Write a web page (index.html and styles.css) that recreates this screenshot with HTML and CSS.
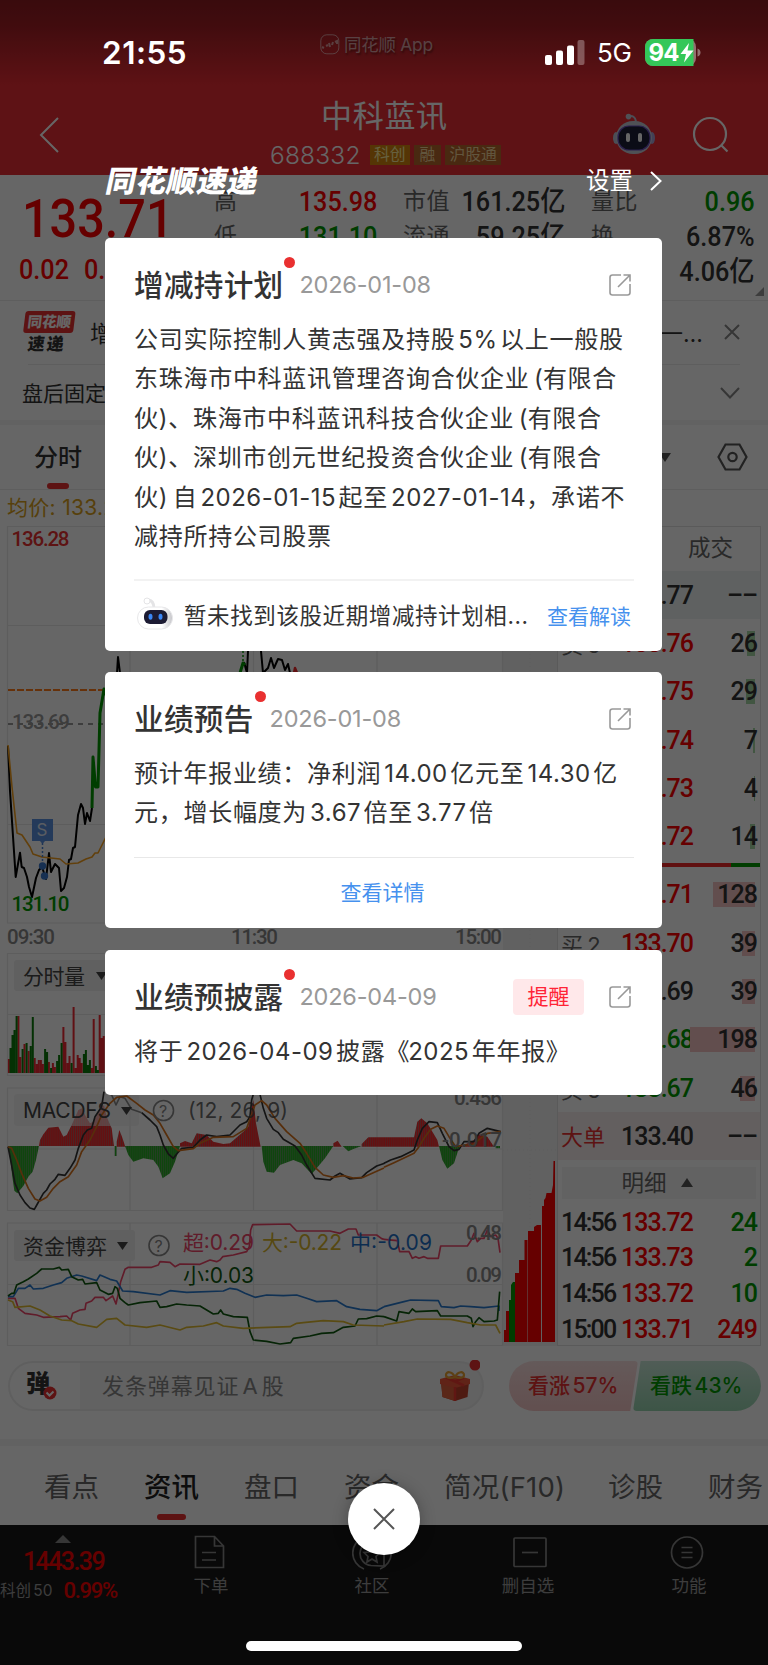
FILE: index.html
```html
<!DOCTYPE html>
<html lang="zh-CN">
<head>
<meta charset="utf-8">
<title>中科蓝讯 688332</title>
<link rel="stylesheet" href="styles.css">
</head>
<body>
<div class="screen">
<main class="page">
  <header class="top">
    <div class="watermark">
      <svg width="20" height="21" viewBox="0 0 20 21" fill="none" stroke="#fff" stroke-opacity=".55"><rect x=".8" y=".8" width="18" height="19" rx="6"/><path stroke-width="2" d="M2 13l2 1M6 12l2-1M9 9l1 4M12 11l1-3M15 8l2-1v3"/></svg>
      <span>同花顺 App</span>
    </div>
    <div class="titlebar">
      <svg class="back" width="22" height="38" viewBox="0 0 22 38" fill="none" stroke="#fff" stroke-width="2"><path d="M20 2L3 19l17 17"/></svg>
      <div class="name">
        <h1>中科蓝讯</h1>
        <div class="code"><span class="num">688332</span><i class="tag gold">科创</i><i class="tag">融</i><i class="tag">沪股通</i></div>
      </div>
      <svg class="bot" width="44" height="42" viewBox="0 0 44 42"><path d="M16 3.500q7-2 8 5" fill="none" stroke="#bcc4d8" stroke-width="2"/><circle cx="16.500" cy="3.600" r="2.800" fill="#c6cbd6"/><ellipse cx="4" cy="25" rx="3" ry="6" fill="#bcc4d8"/><ellipse cx="40" cy="25" rx="3" ry="6" fill="#a9a4d8"/><rect x="4" y="8" width="36" height="33" rx="17" fill="#c6cbd6"/><rect x="6" y="13" width="32" height="24" rx="11" fill="#1c2038" stroke="#6b4fc0" stroke-width="1.200"/><rect x="14" y="20" width="4" height="9" rx="2" fill="#fff"/><rect x="26" y="20" width="4" height="9" rx="2" fill="#fff"/></svg>
      <svg class="search" width="38" height="38" viewBox="0 0 38 38" fill="none" stroke="#fff" stroke-width="2.200"><circle cx="18" cy="18" r="16"/><path d="M29.500 29.500l6 6"/></svg>
    </div>
  </header>

  <section class="quote">
    <div class="last"><b class="din">133.71</b><p><span class="din">0.02</span><span class="din">0.01%</span></p></div>
    <div class="cell k1"><span>高</span><b class="din red">135.98</b><span>低</span><b class="din green">131.10</b></div>
    <div class="cell k2"><span>市值</span><b class="din">161.25亿</b><span>流通</span><b class="din">59.25亿</b></div>
    <div class="cell k3"><span>量比</span><b class="din green">0.96</b><span>换</span><b class="din">6.87%</b><span>额</span><b class="din">4.06亿</b></div>
    <svg class="corner" width="9" height="9"><path d="M9 0v9H0z" fill="#999"/></svg>
  </section>

  <section class="news">
    <div class="flash">
      <div class="logo"><b>同花顺</b><i>速递</i></div>
      <span class="head">增</span><span class="tail">一…</span>
      <svg width="16" height="16" viewBox="0 0 16 16" stroke="#888" stroke-width="2"><path d="M1 1l14 14M15 1L1 15"/></svg>
    </div>
    <div class="after">
      <span>盘后固定</span>
      <svg width="20" height="12" viewBox="0 0 20 12" fill="none" stroke="#888" stroke-width="2"><path d="M1 1l9 9.500L19 1"/></svg>
    </div>
  </section>

  <nav class="period">
    <b>分时</b>
    <svg class="more" width="12" height="9"><path d="M0 0h12L6 9z" fill="#555"/></svg>
    <svg width="31" height="28" viewBox="0 0 31 28" fill="none" stroke="#555" stroke-width="2.200"><path d="M8.500 1.500h14L29.500 14l-7 12.500h-14L1.500 14z"/><circle cx="15.500" cy="14" r="4.200"/></svg>
  </nav>
  <p class="avg">均价: 133.25</p>

  <section class="board">
    <svg class="charts" width="557" height="820" viewBox="0 526 557 820">
      <defs>
        <pattern id="pr" width="6.150" height="10" patternUnits="userSpaceOnUse"><rect width="6.150" height="10" fill="#b85a5c"/><rect width="4.200" height="10" fill="#fa2a2c"/></pattern>
        <pattern id="pg" width="6.150" height="10" patternUnits="userSpaceOnUse"><rect width="6.150" height="10" fill="#5f9a5e"/><rect width="4.200" height="10" fill="#27ac24"/></pattern>
      </defs>
      <path class="gutter" d="M503 526h54v820h-54z"/>
      <g class="grid">
        <path d="M7.500 526.500h495v396.500h-495zM7.500 625.500h495M7.500 824.500h495M130 526v397M253.500 526v397M377 526v397"/>
        <path d="M7.500 953.500h495v122h-495zM7.500 1014.500h495"/>
        <path d="M7.500 1088h495v122.500h-495zM7.500 1149h495M130 1088v122M253.500 1088v122M377 1088v122"/>
        <path d="M7.500 1223h495v122.500h-495zM7.500 1284.500h495M130 1223v122M253.500 1223v122M377 1223v122"/>
        <path stroke-dasharray="1 3" d="M530 526v820M503 1150h54"/>
      </g>
      <path stroke="#ff7a1a" stroke-width="2" stroke-dasharray="7 2" d="M8 690h98"/>
      <path stroke="#999" stroke-width="2" stroke-dasharray="5 5" d="M8 724h98"/>
      <g fill="none" stroke-linejoin="round">
        <path stroke="#000" stroke-width="2" d="M8 746l2 45 5.700 86L20 852.700l1.700 14.300 2.300 1 3 9 2 10 3 10 4-19 3-8 3-3 4 12 3-26 2 19 4-8 4 4 2 23 3-3 3-11 2-17 2-1 2-11 2-1 3-32 3-11 2 4 2 16 2-11 3 8 2-13M117 673l1-16 2 16M244 662l3 11 1-22M261 651l2 22 5-5 3-10 3 10 4-9 4 1 3 10 3-6 2 9"/>
        <path stroke="#f5a01e" stroke-width="1.600" d="M8 745l4 42 5 46 5 2 8 12 3 7 9 3 18 2 6 5 12-1 8-4 6-2 3-4 3 0 8-16"/>
        <path stroke="#090" stroke-width="3" d="M92 808l1-51 2.500 30h2.500l2-74 4-24 2 6M240 673l3-10 2 2"/>
        <path stroke="#090" stroke-width="1.500" stroke-dasharray="2 2" d="M243 651v12"/>
        <path stroke="#f22a2c" stroke-width="2.500" d="M294 673l1-5 2 5"/>
      </g>
      <path fill="#5a92e0" d="M32 819h21v22h-8l-2.500 3-2.500-3h-8z"/>
      <text x="36.500" y="836" font-size="17" fill="#e0e8f5">S</text>
      <path stroke="#4b86d8" stroke-width="1.500" stroke-dasharray="2 2" d="M42.500 843v22"/>
      <circle cx="42.500" cy="866" r="3.700" fill="#3a78cc"/><circle cx="44.500" cy="876" r="3.700" fill="#3a78cc"/>
      <g class="axis">
        <text x="11.500" y="546" textLength="58" fill="#e93030">136.28</text>
        <text x="12" y="728.500" textLength="58" fill="#999">133.69</text>
        <text x="11.500" y="910.500" textLength="58" fill="#090">131.10</text>
        <g fill="#888"><text x="7" y="944" textLength="48">09:30</text><text x="231" y="944" textLength="47">11:30</text><text x="455" y="944" textLength="47">15:00</text></g>
      </g>

      <rect class="pill" x="14" y="960" width="118" height="31" rx="3"/>
      <text class="sel" x="23" y="983.500" textLength="62">分时量</text><path fill="#444" d="M96 972h11l-5.500 8z"/>
      <g stroke-width="2">
        <path stroke="#f02a34" d="M8.900 1073v-14m9.500 14v-57m2 57v-16m4.100 16v-29m4.100 29v-22m6.100 22v-15m2.100 15v-9m2 9v-13m2.100 13v-13m2 13v-9m6 9v-11m4 11v-10m2 10v-6m8.500 6v-46m2 46v-31m2.100 31v-10m2 10v-17m4.100 17v-66m2.100 66v-5m2 5v-18m2 18v-15m2 15v-10m10 10v-5m2 5v-54m6 54v-58m2 58v-35m2 35v-37"/>
        <path stroke="#0b7a0b" d="M10.500 1073v-25m2 25v-38m2 38v-43m2.100 43v-57m6 57v-24m4 24v-30m4.100 30v-27m2.100 27v-56m12.300 56v-24m2 24v-21m4 21v-5m6 5v-12m2 12v-18m2.500 18v-30m10 30v-10m12.300 10v-19m2 19v-23m2 23v-8m2 8v-13m6 13v-7m2 7v-3"/>
      </g>

      <g transform="translate(0 1080) scale(.33333)">
        <path fill="url(#pg)" d="M24 198l6 32 7 60 6 42 9 8 8-10 10-12 15-28 13-15 10-35 9-42zM344 198h6v30h-6zM375 198l10 27 15 20 30-10 30 5 15 20 13 35 22-15 15-35 15-47zM785 198l5 47 10 30 22 3 18-23 40-15 25 10 30 32 15-17 25-30 25-37zM1028 198l17 16 15-7 25-9z"/>
        <path fill="url(#pr)" d="M117 198l3-18 10-17 15-20 30-3 15 30 10-5 15-30 20-45 10-5 13 25 12 20 10-5 20-35 12-15 8 35 15 35 7 53zM350 200v-15l8-35 8 20 10 30zM540 200v-10l15-7 20 7 15-30 30 5 20 20 30 7 20-2 40-35 15-15 15-80 8 70 14 70zM1000 200v-10l13-8 12 18zM1085 200v-8l20-20h47v28z"/>
      </g>
      <g transform="translate(384 920) scale(.33333)">
        <path fill="url(#pr)" d="M0 680v-28h90l10-47 12-10 18 15 30 50 5 20zM230 680l40-20 15-17 25 7 20 30z"/>
        <path fill="url(#pg)" d="M165 678l10 42 15 26 20-16 17-52zM335 678h13v7h-13z"/>
      </g>
      <rect class="pill" x="14" y="1094" width="125" height="32" rx="3" fill-opacity=".6"/>
      <g class="lines" transform="translate(0 1080) scale(.33333)">
        <path stroke="#333" d="M24 200l8 40 13 70 15 35 15 23 15 16 13 4 9-16 18-32 10-10 10-18 15-14 10-15 20 3 15-21 15-25 10-35 15-40 12-15 13-5 10-35 10-15 10-15 7-45M425 98l25 22 20 20 10 25 10 30 15 27 15 13 10-13 15-17 35-3 20-22 20-15 30 5 40-5 30-30 20-10 10-15 5-50 7-25h16l12 50 10 30 20 33 15 10 15 20 35 20 20 27 15 30 25 40 45 5 15-12 15-8 30 17 35-4 15-15 30-20 24-8"/>
        <path stroke="#888" d="M325 40l10 5 13 30 12-25 15 5 20 33 30 10"/>
        <path stroke="#d9731c" d="M24 200l11 5 15 35 15 40 20 45 20 32 15 6 20-11 20-27 20-20 25-15 25-35 15-40 25-35 20-40 15-35 25-35 20-18 30-4 30 22 25 20 25 15 20 25 20 35 20 35 15 12 45-6 20-16 40-18 60-2 40-25 25-70 20-13 15 13 25 40 35 40 40 35 20 30 25 42 25 23 30 7 30-5 30 7 30-2 30-14 32-14"/>
      </g>
      <g class="lines" transform="translate(384 920) scale(.33333)">
        <path stroke="#333" d="M0 730l20-10 30-10 30-15 10-5 10-30 15-35 20-20 25 3 15 32 20 40 15 12 15-4 15-23h30l15-25 25-15 40 10"/>
        <path stroke="#d9731c" d="M0 742l30-14 60-28 15-20 15-25 20-27 20-10 20 7 15 25 20 30 25-5h25l25-20 20-15 40-5"/>
      </g>
      <text class="sel" x="23" y="1118" textLength="88">MACDFS</text><path fill="#444" d="M121 1107h11l-5.500 8z"/>
      <g class="help"><circle cx="163.500" cy="1110.500" r="10"/><text x="159" y="1117">?</text></g>
      <text class="sel" x="188" y="1118" textLength="100" fill-opacity=".8">(12, 26, 9)</text>
      <g class="axis" fill="#888"><text x="454" y="1105" textLength="48">0.456</text><text x="442" y="1147" textLength="60">-0.017</text></g>

      <rect class="pill" x="14" y="1230" width="121" height="31" rx="3"/>
      <text class="sel" x="23" y="1253.500" textLength="84">资金博弈</text><path fill="#444" d="M117 1242h11l-5.500 8z"/>
      <g class="help"><circle cx="159" cy="1245.500" r="10"/><text x="154.500" y="1252">?</text></g>
      <g class="lines" transform="translate(0 1080) scale(.33333)">
        <path stroke="#f0466a" d="M24 655h21l10 30 20 15 35 5 20 7 50-2 20-2 12 12 6-20 22-10 15-2 3-18 17-7 10-11h25l8 10 20-14 10 24 7-32 7-35 13-37 10-6h70l20-7 5-10 30 2 15 13 15-8 60 1 30-13 20 5 10-5 8-10 32-5 40-10 8-15 4-50 6-16 112-2 20 21h100l30 7 25-13h23l7 18h55l15 11 7 2"/>
        <path stroke="#2a7bd0" d="M24 650h16l15-25h20l15-10 10 12 30-2 30-10 25-7 15-13 30-10 15 3 45 14 10-17 30 13 20 5 18 30 32 2 80 10 30-13 50 5 110-4 20-8 20 3 25 12 30 12 35-7 50 2 40-2 30 10 30 10 60-3 30 18 40 8 50 4 22-12"/>
        <path stroke="#0f5a10" d="M24 648l11-8h7l8-25 20-10 15-8 25-17 15-13h35l18-5 7 8 20-2 10 22 20 10 13-2 7 14 35-4 10 22 25 13 13-3 7-20 7 5 8 30 15 13 10 7 35-7 50-5 10 19 20-2 30-8 30 3 40 3 40 24 15-2 7-10 8 12 30 8 42 2 8 43 10 25 40 4 40 8 32-4 8-13 50-7 35-8 35-2 30-16 35-4 10-21 25-1 30-8 22 2"/>
        <path stroke="#e0bb30" d="M24 660l14 5 7 17 45-4 30 12 30 18 35 12 30 2 20 10 55 10 30-24 30-3 25 20 65 7 40-7 60 15 20-8 50-4 40-10 20 10 60 7 140-5 20-10 20-2 60-6 60 3 30 10 92 3"/>
      </g>
      <g class="lines" transform="translate(384 920) scale(.33333)">
        <path stroke="#f0466a" d="M0 958l40 4 7 33h28l10 20 10-5 10 5 15-5 10 5h33l7-37h80l12-18 8-20 10 25 10-10h10l10-25 10 20 15-5 7 10 6 43"/>
        <path stroke="#2a7bd0" d="M0 1160l60-15 20-5 83 2 9 18 38 3 20-5 30 2 40 3 45-5v15"/>
        <path stroke="#0f5a10" d="M0 1190l38 13 7-28 30 5 10-13 10 8 65-3 10 16h80l12 7 5 25 8-15 10-12 15 12 30-2 10-3 7-85"/>
        <path stroke="#e0bb30" d="M0 1215l60-10 40-8 100 1 50 10 40 7h45l13 25"/>
      </g>
      <g class="legend">
        <text x="183" y="1250" textLength="71" fill="#f0466a">超:0.29</text>
        <text x="262" y="1250" textLength="80" fill="#d8b52c">大:-0.22</text>
        <text x="350" y="1250" textLength="82" fill="#1f70c8">中:-0.09</text>
        <text x="183" y="1283" textLength="71" fill="#0f5a10">小:0.03</text>
      </g>
      <g class="axis" fill="#888"><text x="466" y="1240" textLength="36">0.48</text><text x="466" y="1282" textLength="36">0.09</text></g>
      <path fill="#f00" d="M504 1342v-12h2v-19h3v31zM515 1342v-69h4v-13h6v-20h2v102zM519 1260h5.500v-20h3v102H519zM528 1342v-111h6v-4l3-2h4v117zM542 1342v-136h2v-6l1.500-2 1-5h5l1.500-8 .5-24h1.500v181z"/>
      <path fill="#090" d="M509 1342v-42h2v-15l2-3h2v60z"/>
    </svg>

    <div class="book">
      <div class="bh"><span>成交</span></div>
      <div class="r hot"><span></span><b>133.77</b><em>––</em></div>
      <div class="r red"><span>卖 5</span><b>133.76</b><em><i class="g" style="width:8px"></i>26</em></div>
      <div class="r red"><span></span><b>133.75</b><em><i class="g" style="width:9px"></i>29</em></div>
      <div class="r red"><span></span><b>133.74</b><em><i class="g" style="width:2px"></i>7</em></div>
      <div class="r red"><span></span><b>133.73</b><em><i class="g" style="width:1px"></i>4</em></div>
      <div class="r red"><span></span><b>133.72</b><em><i class="g" style="width:5px"></i>14</em></div>
      <div class="ratio"></div>
      <div class="r red"><span></span><b>133.71</b><em><i style="width:42px"></i>128</em></div>
      <div class="r red"><span>买 2</span><b>133.70</b><em><i style="width:13px"></i>39</em></div>
      <div class="r"><span></span><b>133.69</b><em><i style="width:13px"></i>39</em></div>
      <div class="r green"><span></span><b>133.68</b><em><i style="width:65px"></i>198</em></div>
      <div class="r green"><span>买 5</span><b>133.67</b><em><i style="width:15px"></i>46</em></div>
      <div class="r big"><span>大单</span><b>133.40</b><em>––</em></div>
      <div class="detail">明细<svg width="12" height="9"><path d="M0 9h12L6 0z" fill="#555"/></svg></div>
      <div class="t"><span>14:56</span><b>133.72</b><em class="green">24</em></div>
      <div class="t"><span>14:56</span><b>133.73</b><em class="green">2</em></div>
      <div class="t"><span>14:56</span><b>133.72</b><em class="green">10</em></div>
      <div class="t"><span>15:00</span><b>133.71</b><em class="red">249</em></div>
    </div>
  </section>

  <section class="danmu">
    <div class="bar">
      <div class="dan">弹<svg width="14" height="14" viewBox="0 0 14 14"><circle cx="7" cy="7" r="6.500" fill="#e93030"/><path d="M3.500 6.500L6.500 9.500l4-4" fill="none" stroke="#fff" stroke-width="2"/></svg></div>
      <span class="hint">发条弹幕见证 A 股</span>
      <svg class="gift" width="40" height="44" viewBox="0 0 40 44"><circle cx="35" cy="5" r="5.500" fill="#e93030"/><path d="M1 22l14-4 14 4-1.500 15L15 41 2.500 37z" fill="#c2432c"/><path d="M1 22l14 4v15L2.500 37z" fill="#e0623c"/><path d="M0 19l15-4 15 4v5l-15 4-15-4z" fill="#f0583a"/><path d="M15 27v14M6 17.500l18 8M24 17.500l-9 4" stroke="#f03a30" stroke-width="2.500" fill="none"/><path d="M15 17c-3-6-9-6-9-2s6 3 9 2c3-6 9-6 9-2s-6 3-9 2" fill="none" stroke="#e8a030" stroke-width="2.200"/></svg>
    </div>
    <div class="vote"><b class="up">看涨 57%</b><b class="down">看跌 43%</b></div>
  </section>

  <nav class="tabs"><span>看点</span><b>资讯</b><span>盘口</span><span>资金</span><span class="wide">简况(F10)</span><span>诊股</span><span>财务</span></nav>

  <footer class="dock">
    <div class="idx"><svg width="16" height="8"><path d="M0 8h16L8 0z" fill="#888"/></svg><b class="din">1443.39</b><p>科创 50<b class="din">0.99%</b></p></div>
    <div class="item d1"><svg width="34" height="36" viewBox="0 0 34 36"><path d="M3.500 2.500h19l9 9.500v21.500h-28zM22.500 2.500V12h9M10 18.500h14M10 26h14"/></svg><span>下单</span></div>
    <div class="item d2"><svg width="40" height="36" viewBox="0 0 40 36"><path d="M12 35A17 17 0 0 1 12 3h16a17 17 0 0 1 0 32M19 31.500a12 12 0 1 1 13-11.500v12zM20 13l2.500 5 5.500.500-4 4 1 5.500-5-3-5 3 1-5.500-4-4 5.500-.500z"/></svg><span>社区</span></div>
    <div class="item d3"><svg width="36" height="36" viewBox="0 0 36 36"><rect x="2" y="4" width="32" height="28.500" rx="1"/><path d="M10 18.500h16"/></svg><span>删自选</span></div>
    <div class="item d4"><svg width="36" height="36" viewBox="0 0 36 36"><circle cx="18" cy="18.500" r="15.500"/><path d="M12.500 13.500h11M12.500 18.500h11M12.500 23.500h11"/></svg><span>功能</span></div>
  </footer>
</main>

<div class="overlay">
  <div class="status">
    <b>21:55</b>
    <svg class="sig" width="40" height="25" viewBox="0 0 40 25" fill="#fff"><rect y="15" width="7" height="10" rx="2"/><rect x="11" y="10.500" width="7" height="14.500" rx="2"/><rect x="22" y="5.500" width="7" height="19.500" rx="2"/><rect x="32.500" y="0" width="7" height="25" rx="2" fill-opacity=".3"/></svg>
    <span>5G</span>
    <svg class="bat" width="56" height="27" viewBox="0 0 56 27"><rect width="51" height="27" rx="8" fill="#fff" fill-opacity=".4"/><path d="M8 0h40.500v27H8a8 8 0 0 1-8-8V8a8 8 0 0 1 8-8z" fill="#34c759"/><path d="M52.500 9.500q3 1 3 4t-3 4z" fill="#fff" fill-opacity=".4"/><text x="3.500" y="22" textLength="31">94</text><path d="M44 4L35.500 15h5.500l-2 8.500 9.500-12h-6z" fill="#fff"/></svg>
  </div>
  <div class="pophead"><strong>同花顺速递</strong><span>设置<svg width="12" height="20" viewBox="0 0 12 20" fill="none" stroke="#fff" stroke-width="2"><path d="M1 1l9.500 9L1 19"/></svg></span></div>

  <article class="card c1">
    <div class="ch"><h2>增减持计划</h2><time>2026-01-08</time><svg class="share" viewBox="0 0 22 22"><path d="M12 1H3.500Q1 1 1 3.500v15Q1 21 3.500 21h15q2.500 0 2.500-2.500V10M9 13L20.500 1.500M14.500 1H21v6.500"/></svg></div>
    <p>公司实际控制人黄志强及持股<u>5%</u>以上一般股<br>东珠海市中科蓝讯管理咨询合伙企业<s>(</s>有限合<br>伙)、珠海市中科蓝讯科技合伙企业<s>(</s>有限合<br>伙)、深圳市创元世纪投资合伙企业<s>(</s>有限合<br>伙)<s></s>自<u>2026-01-15</u>起至<u class="end">2027-01-14</u>，承诺不<br>减持所持公司股票</p>
    <div class="ai">
      <svg width="38" height="34" viewBox="0 0 38 34"><defs><linearGradient id="rb"><stop offset=".7" stop-color="#fff"/><stop offset="1" stop-color="#c4c4c8"/></linearGradient></defs><path d="M12 3q6 0 6 9" fill="none" stroke="#e4e4e6" stroke-width="3"/><circle cx="11" cy="4" r="3" fill="#fff" stroke="#e4e4e6"/><rect x="1.500" y="10" width="35" height="22" rx="11" fill="url(#rb)" stroke="#e8e8ea"/><rect x="8" y="13" width="23.500" height="14" rx="6" fill="#1c1b33"/><ellipse cx="14.500" cy="19.800" rx="2" ry="3" fill="#3a86f5"/><ellipse cx="24.500" cy="19.800" rx="2" ry="3" fill="#3a86f5"/></svg>
      <span>暂未找到该股近期增减持计划相...</span><a>查看解读</a>
    </div>
  </article>

  <article class="card c2">
    <div class="ch"><h2>业绩预告</h2><time>2026-01-08</time><svg class="share" viewBox="0 0 22 22"><path d="M12 1H3.500Q1 1 1 3.500v15Q1 21 3.500 21h15q2.500 0 2.500-2.500V10M9 13L20.500 1.500M14.500 1H21v6.500"/></svg></div>
    <p>预计年报业绩：净利润<u>14.00</u>亿元至<u>14.30</u>亿<br>元，增长幅度为<u>3.67</u>倍至<u>3.77</u>倍</p>
    <div class="link"><a>查看详情</a></div>
  </article>

  <article class="card c3">
    <div class="ch"><h2>业绩预披露</h2><time>2026-04-09</time><button>提醒</button><svg class="share" viewBox="0 0 22 22"><path d="M12 1H3.500Q1 1 1 3.500v15Q1 21 3.500 21h15q2.500 0 2.500-2.500V10M9 13L20.500 1.500M14.500 1H21v6.500"/></svg></div>
    <p>将于<u>2026-04-09</u>披露《<u class="year">2025</u>年年报》</p>
  </article>

  <div class="close"><svg width="22" height="22" viewBox="0 0 22 22" stroke="#555" stroke-width="2"><path d="M1 1l20 20M21 1L1 21"/></svg></div>
  <div class="home"></div>
</div>
</div>
</body>
</html>
```
FILE: styles.css
```css
* { box-sizing: border-box; margin: 0; padding: 0; }
body { width: 768px; font-family: Inter, "Noto Sans CJK SC", sans-serif; color: #333; background: #fff; }
i, em { font-style: normal; }
svg { display: block; flex: none; }
.screen { position: relative; width: 768px; height: 1665px; overflow: hidden; }
.page { height: 1665px; background: #fff; display: flex; flex-direction: column; }
.red { color: #f00; }
.green { color: #090; }
.din { font-family: Roboto, "Noto Sans CJK SC", sans-serif; font-weight: 500; display: inline-block; white-space: nowrap; }

/* header */
.top { height: 175px; padding-top: 34px; color: #fff; background: linear-gradient(#901c21, #a31f25 25px, #eb2d35 85px); }
.watermark { display: flex; gap: 4px; padding-left: 320px; height: 22px; color: rgba(255,255,255,.6); font-size: 17.4px; line-height: 22px; text-shadow: 1px 2px 2px rgba(0,0,0,.4); letter-spacing: -.2px; }
.titlebar { display: flex; align-items: flex-start; padding-top: 44px; }
.back { margin: 16px 0 0 38px; }
.name { width: 246px; margin: 0 0 0 210px; }
h1 { font-size: 31px; font-weight: 400; letter-spacing: .7px; line-height: 32px; padding-left: 51px; }
.code { display: flex; align-items: center; height: 22px; margin-top: 12px; }
.num { font-size: 24.500px; font-weight: 300; width: 100px; letter-spacing: .2px; flex: none; }
.tag { height: 20px; line-height: 19px; font-size: 15.800px; padding: 0 4px; margin-right: 4px; background: #b6672c; color: #f3d49a; white-space: nowrap; }
.tag.gold { background: #d4860e; color: #fff0a0; }
.tag:nth-of-type(2) { padding: 0 6px; }
.bot { margin: 13px 0 0 96px; }
.search { margin: 16px 0 0 36px; }

/* quote */
.quote { position: relative; height: 126px; display: flex; border-bottom: 1px solid #eaeaea; }
.last { width: 214px; padding: 15px 0 0 22px; color: #f00; }
.last > b { font-size: 54px; line-height: 58px; transform: scaleX(.9); transform-origin: 0 0; }
.last p { display: flex; gap: 9px; font-size: 28px; line-height: 36px; padding-top: 4px; margin-left: -3px; }
.last p .din { transform: scaleX(.9); transform-origin: 0 50%; font-size: 28px; width: 56px; }
.cell { display: grid; grid-template-columns: auto auto; justify-content: space-between; align-content: start; grid-auto-rows: 35px; padding-top: 9px; line-height: 35px; font-size: 23px; overflow: hidden; }
.cell span { color: #666; letter-spacing: .5px; white-space: nowrap; }
.cell .din { font-size: 28px; text-align: right; transform: scaleX(.9); transform-origin: 100% 50%; }
.k1 { width: 163px; }
.k2 { width: 162px; margin-left: 26px; }
.k3 { width: 164px; margin-left: 26px; }
.k2 .din { margin-left: -20px; }
.corner { position: absolute; right: 4px; bottom: 4px; }

/* news strip */
.news { height: 124px; border-bottom: 5px solid #f4f4f4; }
.flash { height: 64px; display: flex; align-items: center; padding: 0 28px 2px 22px; position: relative; font-size: 23px; }
.flash::after { content: ""; position: absolute; left: 28px; right: 28px; bottom: 0; height: 1px; background: #eaeaea; }
.logo { width: 50px; height: 44px; margin: 2px 17px 0 1px; text-align: center; transform: skewX(-7deg); }
.logo b { display: block; height: 22px; line-height: 22px; font-size: 14.500px; font-weight: 800; color: #fff; background: #e93030; border-radius: 3px; white-space: nowrap; }
.logo i { display: block; font-size: 17px; line-height: 23px; font-weight: 900; letter-spacing: 2px; }
.tail { margin-left: auto; margin-right: 21px; }
.after { height: 55px; display: flex; align-items: center; justify-content: space-between; padding: 0 28px 0 22px; font-size: 21px; }
.after span { padding-bottom: 2px; }

/* period tabs */
.period { height: 65px; display: flex; align-items: center; border-bottom: 1px solid #eaeaea; padding: 0 20px 0 34px; position: relative; }
.period b { font-weight: 500; font-size: 24px; padding-bottom: 3px; }
.period::before { content: ""; position: absolute; left: 47px; bottom: 0; width: 22px; height: 6px; border-radius: 3px; background: #e93030; }
.more { margin-left: auto; margin-right: 46px; }
.avg { height: 36px; line-height: 36px; padding-left: 7px; font-size: 21px; color: #d9a020; letter-spacing: .3px; }

/* charts and order book */
.board { display: flex; height: 820px; }
.charts text { font-family: Inter, "Noto Sans CJK SC", sans-serif; }
.gutter { fill: #f2f2f2; }
.grid path { fill: none; stroke: #e8e8e8; stroke-width: 1.2; }
.grid path:last-child { stroke-width: 1; }
.charts .axis text { font-family: Roboto, sans-serif; font-weight: 500; font-size: 20.500px; }
.pill { fill: #f0f0f0; }
.charts .sel { font-size: 21px; fill: #444; }
.help circle { fill: none; stroke: #888; stroke-width: 1.6; }
.charts .help text { font-size: 16px; fill: #888; }
.charts .legend text { font-size: 21px; }
.lines path { fill: none; stroke-width: 5; stroke-linejoin: round; }
.book { width: 204px; height: 820px; border: 1.500px solid #e2e2e2; border-top-width: 1px; }
.bh { height: 44px; line-height: 42px; font-size: 22.500px; color: #666; padding-left: 130px; }
.r, .t { display: grid; grid-template-columns: 60px 74px 1fr; align-items: center; height: 48.300px; padding: 0 3px 0 3px; font-size: 22px; }
.r b, .r em, .t b, .t em, .t span { font-family: Roboto, sans-serif; font-weight: 500; font-size: 25px; letter-spacing: -1px; white-space: nowrap; }
.r span { color: #666; white-space: nowrap; letter-spacing: -1px; }
.r em { text-align: right; color: #333; position: relative; z-index: 0; }
.r em i { position: absolute; right: 2px; top: 2px; height: 25px; background: #f5c2c2; z-index: -1; }
.r em i.g { background: #a5d6a5; }
.r.hot { background: #edf3f2; }
.r.red b { color: #f00; }
.r.green b { color: #090; }
.ratio { height: 4px; margin: 2px 0 4px; background: linear-gradient(90deg, #f0282a 173px, #090 173px); }
.r.big { background: #f7eeee; height: 48px; }
.r.big span { color: #e93030; letter-spacing: 0; padding-bottom: 2px; }
.detail { display: flex; align-items: center; justify-content: center; gap: 14px; height: 32px; margin: 7px 4px 5px; background: #f5f5f5; font-size: 22.500px; line-height: 28px; color: #666; padding: 0 4px 1px 0; }
.t { height: 35.700px; }
.t span { letter-spacing: -1.800px; }
.t b { color: #f00; }
.t em { text-align: right; }

/* comment bar */
.danmu { height: 100px; display: flex; padding: 15px 7px 0 8px; border-bottom: 7px solid #f4f4f4; }
.bar { width: 476px; height: 50px; border-radius: 25px; border: 2px solid #eee; background: #f4f4f4; display: flex; align-items: center; position: relative; font-size: 22px; color: #888; }
.hint { padding-bottom: 4px; letter-spacing: .9px; word-spacing: -4px; }
.dan { width: 70px; height: 46px; border-radius: 23px 0 0 23px; background: #fff; color: #333; font-weight: 900; font-size: 24px; line-height: 42px; padding-left: 16px; position: relative; margin-right: 22px; }
.dan svg { position: absolute; left: 33px; top: 23px; }
.gift { position: absolute; right: 2px; top: -3px; }
.vote { display: flex; margin-left: 25px; width: 252px; height: 50px; position: relative; }
.vote b { font-weight: 500; font-size: 21px; line-height: 49px; height: 50px; white-space: nowrap; word-spacing: -3px; }
.up { width: 129px; padding-left: 19px; color: #e93030; background: linear-gradient(#fbe0e0, #f5c6c6); border-radius: 25px 4px 0 25px; clip-path: polygon(0 0, 100% 0, 94% 100%, 0 100%); }
.down { width: 128px; margin-left: -5px; padding-left: 17px; color: #090; background: linear-gradient(#c9e8d8, #98d4b0); border-radius: 4px 25px 25px 4px; clip-path: polygon(6% 0, 100% 0, 100% 100%, 0 100%); }

/* section tabs */
.tabs { height: 79px; display: flex; padding-left: 44px; font-size: 27.500px; line-height: 82px; color: #666; }
.tabs span, .tabs b { width: 100px; flex: none; white-space: nowrap; }
.tabs .wide { width: 164px; letter-spacing: .2px; }
.tabs b { color: #222; font-weight: 500; position: relative; }
.tabs b::after { content: ""; position: absolute; left: 13px; bottom: 5px; width: 29px; height: 6px; border-radius: 3px; background: #e93030; }

/* dock */
.dock { flex: 1; background: #181818; display: flex; padding-top: 9px; color: #999; }
.idx { width: 128px; }
.idx svg { margin: 1px 0 0 55px; }
.idx > .din { display: block; color: #f00; font-size: 25px; line-height: 38px; margin-left: 23px; letter-spacing: -1.600px; }
.idx p { font-size: 15.500px; line-height: 20px; display: flex; white-space: nowrap; word-spacing: -2px; }
.idx p .din { color: #f00; font-size: 22px; margin-left: 11px; letter-spacing: -1.300px; }
.item { display: flex; flex-direction: column; align-items: center; font-size: 17.500px; line-height: 18px; gap: 7px; width: 60px; white-space: nowrap; }
.item svg { fill: none; stroke: #888; stroke-width: 1.700; }
.d1 { margin-left: 53px; }
.d1 svg { margin-left: -5px; }
.d2 { margin-left: 101px; }
.d3 { margin-left: 96px; }
.d3 svg { margin-left: 3px; }
.d4 { margin-left: 101px; }
.d4 svg { margin-left: -4px; }

/* popup layer */
.overlay { position: absolute; inset: 0; background: rgba(0,0,0,.6); color: #fff; }
.status { height: 128px; display: flex; align-items: center; padding: 0 0 24px 102px; }
.status b { font-size: 31.500px; font-weight: 600; width: 443px; letter-spacing: .500px; }
.status span { font-size: 26px; margin-left: 12px; width: 48px; letter-spacing: -.300px; }
.bat text { font: 700 24px Inter, sans-serif; fill: #fff; }
.pophead { display: flex; justify-content: space-between; align-items: center; height: 40px; margin: 34px 106px 36px 107px; }
.pophead strong { font-size: 30px; font-weight: 900; transform: skewX(-12deg); letter-spacing: .4px; position: relative; top: -3px; }
.pophead span { display: flex; align-items: center; gap: 17px; font-size: 23.500px; line-height: 30px; position: relative; top: -1px; }
.card { width: 557px; margin-left: 105px; background: #fff; border-radius: 5px; color: #333; padding: 27px 29px 0 29px; }
.c1 { height: 413px; }
.c2 { height: 256px; margin-top: 21px; }
.c3 { height: 145px; margin-top: 22px; }
.ch { display: flex; align-items: center; height: 40px; }
h2 { font-size: 29.600px; font-weight: 500; position: relative; top: -2px; letter-spacing: .3px; }
h2::after { content: ""; position: absolute; right: -12px; top: -5px; width: 11px; height: 11px; border-radius: 50%; background: #e93030; }
time { font-size: 23.500px; color: #999; margin-left: 16px; letter-spacing: -.200px; position: relative; top: -1px; }
.share { width: 22px; height: 22px; margin-left: auto; margin-right: 2px; fill: none; stroke: #999; stroke-width: 1.600; overflow: visible; }
button { margin-left: auto; margin-right: 25px; width: 71px; height: 36px; border: 0; border-radius: 4px; background: #ffe8ea; color: #ff2436; font: 21px "Noto Sans CJK SC", sans-serif; line-height: 32px; padding-bottom: 4px; }
button + .share { margin-left: 0; }
.card p { font-size: 24px; line-height: 39.400px; letter-spacing: .72px; margin-top: 15px; white-space: nowrap; }
.card p u { text-decoration: none; margin: 0 2.500px 0 3px; letter-spacing: .500px; }
.card p u.end { margin-right: 0; }
.card p u.year { margin-left: -2px; }
.card p s { text-decoration: none; margin-left: 4.500px; letter-spacing: .1px; }
.ai { margin: 23px -1px 0 0; border-top: 2px solid #f2f2f2; height: 68px; display: flex; align-items: center; font-size: 22.500px; }
.ai svg { margin: 0 10px 0 2px; }
.ai span { letter-spacing: .6px; white-space: nowrap; }
a { color: #4691ee; font-size: 21px; white-space: nowrap; }
.ai a { margin-left: auto; margin-right: 3px; padding-top: 2px; }
.link { margin: 24px -1px 0 0; border-top: 1px solid #e8e8e8; line-height: 70px; text-align: center; padding-right: 3px; }
.close { position: absolute; left: 348px; top: 1483px; width: 72px; height: 72px; border-radius: 50%; background: #fff; display: grid; place-items: center; box-shadow: 0 2px 16px rgba(0,0,0,.3); }
.home { position: absolute; left: 246px; top: 1641px; width: 276px; height: 10px; border-radius: 5px; background: #fff; }
```
